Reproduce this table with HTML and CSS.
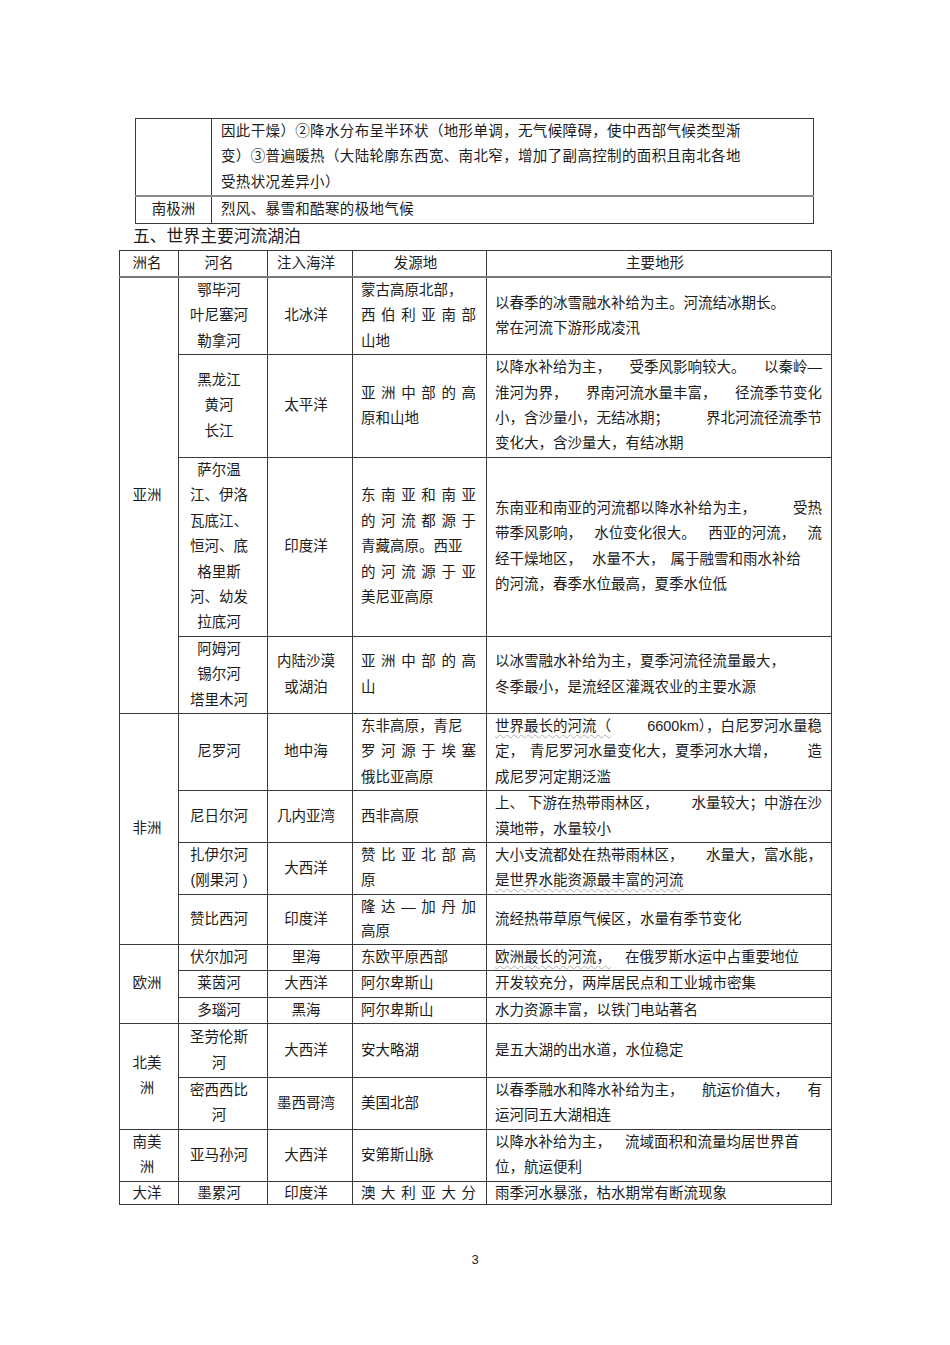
FILE: index.html
```html
<!DOCTYPE html>
<html lang="zh-CN">
<head>
<meta charset="utf-8">
<title>世界主要河流湖泊</title>
<link rel="stylesheet" href="styles.css">
</head>
<body>
<div class="page">
  <table class="t1">
    <colgroup><col class="w76"><col class="w602"></colgroup>
    <tr>
      <td></td>
      <td class="txt">因此干燥）②降水分布呈半环状（地形单调，无气候障碍，使中西部气候类型渐<br>变）③普遍暖热（大陆轮廓东西宽、南北窄，增加了副高控制的面积且南北各地<br>受热状况差异小）</td>
    </tr>
    <tr>
      <td class="cc">南极洲</td>
      <td class="txt">烈风、暴雪和酷寒的极地气候</td>
    </tr>
  </table>

  <div class="h5">五、世界主要河流湖泊</div>

  <table class="t2">
    <colgroup><col class="w59"><col class="w89"><col class="w85"><col class="w134"><col class="w345"></colgroup>
    <tr class="head">
      <td class="c1">洲名</td><td class="c">河名</td><td class="c">注入海洋</td><td class="c">发源地</td><td class="c">主要地形</td>
    </tr>

    <tr>
      <td class="c1" rowspan="4">亚洲</td>
      <td class="c">鄂毕河<br>叶尼塞河<br>勒拿河</td>
      <td class="c">北冰洋</td>
      <td class="src"><span class="ln">蒙古高原北部，</span><span class="ln j">西伯利亚南部</span><span class="ln">山地</span></td>
      <td class="desc"><span class="ln">以春季的冰雪融水补给为主。河流结冰期长。</span><span class="ln">常在河流下游形成凌汛</span></td>
    </tr>
    <tr>
      <td class="c">黑龙江<br>黄河<br>长江</td>
      <td class="c">太平洋</td>
      <td class="src"><span class="ln j">亚洲中部的高</span><span class="ln">原和山地</span></td>
      <td class="desc">
        <span class="ln sb"><span>以降水补给为主，</span><span>受季风影响较大。</span><span>以秦岭—</span></span>
        <span class="ln sb"><span>淮河为界，</span><span>界南河流水量丰富，</span><span>径流季节变化</span></span>
        <span class="ln sb"><span>小，含沙量小，无结冰期；</span><span>界北河流径流季节</span></span>
        <span class="ln">变化大，含沙量大，有结冰期</span>
      </td>
    </tr>
    <tr>
      <td class="c">萨尔温<br>江、伊洛<br>瓦底江、<br>恒河、底<br>格里斯<br>河、幼发<br>拉底河</td>
      <td class="c">印度洋</td>
      <td class="src"><span class="ln j">东南亚和南亚</span><span class="ln j">的河流都源于</span><span class="ln">青藏高原。西亚</span><span class="ln j">的河流源于亚</span><span class="ln">美尼亚高原</span></td>
      <td class="desc">
        <span class="ln sb"><span>东南亚和南亚的河流都以降水补给为主，</span><span>受热</span></span>
        <span class="ln sb"><span>带季风影响，</span><span>水位变化很大。</span><span>西亚的河流，</span><span>流</span></span>
        <span class="ln">经干燥地区，<span class="g10">水量不大，</span><span class="g6">属于融雪和雨水补给</span></span>
        <span class="ln">的河流，春季水位最高，夏季水位低</span>
      </td>
    </tr>
    <tr>
      <td class="c">阿姆河<br>锡尔河<br>塔里木河</td>
      <td class="c">内陆沙漠<br>或湖泊</td>
      <td class="src"><span class="ln j">亚洲中部的高</span><span class="ln">山</span></td>
      <td class="desc"><span class="ln">以冰雪融水补给为主，夏季河流径流量最大，</span><span class="ln">冬季最小，是流经区灌溉农业的主要水源</span></td>
    </tr>

    <tr>
      <td class="c1" rowspan="4">非洲</td>
      <td class="c">尼罗河</td>
      <td class="c">地中海</td>
      <td class="src"><span class="ln">东非高原，青尼</span><span class="ln j">罗河源于埃塞</span><span class="ln">俄比亚高原</span></td>
      <td class="desc">
        <span class="ln sb"><span class="wv">世界最长的河流（</span><span>6600km），白尼罗河水量稳</span></span>
        <span class="ln sb"><span>定，<span class="g6">青尼罗河水量变化大，夏季河水大增，</span></span><span>造</span></span>
        <span class="ln">成尼罗河定期泛滥</span>
      </td>
    </tr>
    <tr>
      <td class="c">尼日尔河</td>
      <td class="c">几内亚湾</td>
      <td class="src">西非高原</td>
      <td class="desc">
        <span class="ln sb"><span>上、<span class="g4">下游在热带雨林区，</span></span><span>水量较大；中游在沙</span></span>
        <span class="ln">漠地带，水量较小</span>
      </td>
    </tr>
    <tr>
      <td class="c">扎伊尔河<br>(刚果河 )</td>
      <td class="c">大西洋</td>
      <td class="src"><span class="ln j">赞比亚北部高</span><span class="ln">原</span></td>
      <td class="desc">
        <span class="ln sb"><span>大小支流都处在热带雨林区，</span><span>水量大，富水能，</span></span>
        <span class="ln"><span class="wv wide">是世界水能资源最丰富的河流</span></span>
      </td>
    </tr>
    <tr class="tight">
      <td class="c">赞比西河</td>
      <td class="c">印度洋</td>
      <td class="src"><span class="ln j">隆达—加丹加</span><span class="ln">高原</span></td>
      <td class="desc">流经热带草原气候区，水量有季节变化</td>
    </tr>

    <tr>
      <td class="c1" rowspan="3">欧洲</td>
      <td class="c">伏尔加河</td>
      <td class="c">里海</td>
      <td class="src">东欧平原西部</td>
      <td class="desc"><span class="wv">欧洲最长的河流，</span><span class="g14">在俄罗斯水运中占重要地位</span></td>
    </tr>
    <tr>
      <td class="c">莱茵河</td>
      <td class="c">大西洋</td>
      <td class="src">阿尔卑斯山</td>
      <td class="desc">开发较充分，两岸居民点和工业城市密集</td>
    </tr>
    <tr>
      <td class="c">多瑙河</td>
      <td class="c">黑海</td>
      <td class="src">阿尔卑斯山</td>
      <td class="desc">水力资源丰富，以铁门电站著名</td>
    </tr>

    <tr class="r54">
      <td class="c1" rowspan="2">北美<br>洲</td>
      <td class="c">圣劳伦斯<br>河</td>
      <td class="c">大西洋</td>
      <td class="src">安大略湖</td>
      <td class="desc">是五大湖的出水道，水位稳定</td>
    </tr>
    <tr>
      <td class="c">密西西比<br>河</td>
      <td class="c">墨西哥湾</td>
      <td class="src">美国北部</td>
      <td class="desc">
        <span class="ln sb"><span>以春季融水和降水补给为主，</span><span>航运价值大，</span><span>有</span></span>
        <span class="ln">运河同五大湖相连</span>
      </td>
    </tr>

    <tr>
      <td class="c1">南美<br>洲</td>
      <td class="c">亚马孙河</td>
      <td class="c">大西洋</td>
      <td class="src">安第斯山脉</td>
      <td class="desc">
        <span class="ln">以降水补给为主，<span class="g14">流域面积和流量均居世界首</span></span>
        <span class="ln">位，航运便利</span>
      </td>
    </tr>

    <tr class="r24">
      <td class="c1">大洋</td>
      <td class="c">墨累河</td>
      <td class="c">印度洋</td>
      <td class="src"><span class="ln j">澳大利亚大分</span></td>
      <td class="desc">雨季河水暴涨，枯水期常有断流现象</td>
    </tr>
  </table>

  <div class="pno">3</div>
</div>
</body>
</html>
```

FILE: styles.css
```css
html, body {
  margin: 0;
  padding: 0;
  background: #ffffff;
}

body {
  font-family: "Liberation Sans", "Noto Sans CJK SC", sans-serif;
  color: #1c1c1c;
}

.page {
  width: 950px;
  height: 1345px;
  padding-top: 118px;
  box-sizing: border-box;
  overflow: hidden;
}

table {
  border-collapse: collapse;
  table-layout: fixed;
  font-size: 14.5px;
  line-height: 25.4px;
}

td {
  padding: 0;
  vertical-align: middle;
  border: 1px solid #3a3a3a;
  white-space: nowrap;
}

/* top table */
.t1 {
  margin-left: 135px;
  width: 678px;
  border: 1px solid #111;
}

.w76 { width: 76px; }
.w602 { width: 602px; }

.t1 .txt {
  padding: 0 4px 0 9px;
  letter-spacing: 0.35px;
}

.t1 tr + tr td {
  border-top: 2px solid #8a8a8a;
}

.cc {
  text-align: center;
}

/* heading */
.h5 {
  margin-left: 133px;
  font-size: 16.8px;
  line-height: 26px;
  height: 26px;
  white-space: nowrap;
}

/* main table */
.t2 {
  margin-left: 119px;
  width: 712px;
  border: 1px solid #111;
}

.w59 { width: 59px; }
.w89 { width: 89px; }
.w85 { width: 85px; }
.w134 { width: 134px; }
.w345 { width: 345px; }

.t2 .head td {
  border-bottom: 2px solid #7a7a7a;
}

.c {
  text-align: center;
  padding: 0 9px 0 1px;
}

.c1 {
  text-align: center;
  padding: 0 5px 0 1px;
}

.src {
  padding: 0 10px 0 8px;
}

.desc {
  padding: 0 9px 0 8px;
}

.ln {
  display: block;
}

.j {
  text-align: justify;
  text-align-last: justify;
}

.sb {
  display: flex;
  justify-content: space-between;
}

.g4 { margin-left: 4px; }
.g6 { margin-left: 6px; }
.g10 { margin-left: 10px; }
.g14 { margin-left: 14px; }

.wv {
  text-decoration-line: underline;
  text-decoration-style: wavy;
  text-decoration-color: #b0b0b0;
  text-decoration-thickness: 1px;
  text-underline-offset: 3px;
}

.wide {
  padding-right: 24px;
}

.tight td {
  line-height: 24.5px;
}

.r54 { height: 54px; }

.r24 td {
  line-height: 22px;
}

.pno {
  text-align: center;
  font-family: "Liberation Sans", sans-serif;
  font-size: 13px;
  line-height: 16px;
  margin-top: 47px;
}
```
